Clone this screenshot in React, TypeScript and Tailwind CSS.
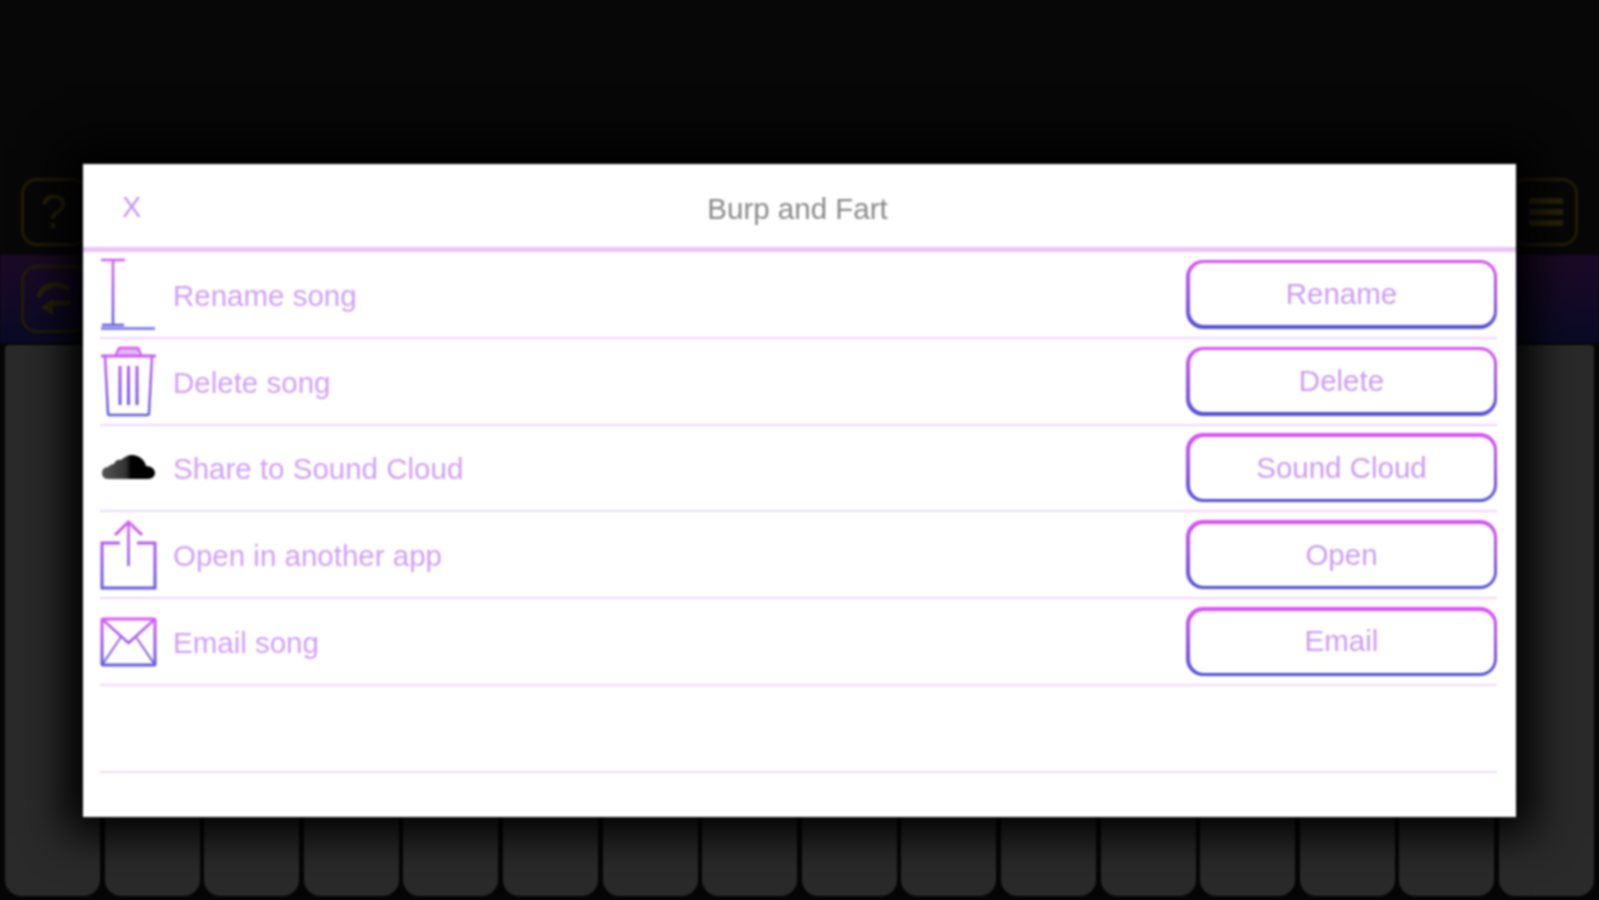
import React from 'react';

const keys = Array.from({ length: 16 }, (_, i) => i);

const Grad: React.FC<{ id: string; h: number }> = ({ id, h }) => (
    <defs>
        <linearGradient id={id} gradientUnits="userSpaceOnUse" x1="0" y1="0" x2="0" y2={h}>
            <stop offset="0" stopColor="#d95cf6" />
            <stop offset="1" stopColor="#5f5cdc" />
        </linearGradient>
    </defs>
);

const RenameIcon = () => (
    <svg width="57" height="72" viewBox="0 0 57 72" fill="none">
        <Grad id="g-rename" h={72} />
        <g stroke="url(#g-rename)" strokeWidth="2.500">
            <path d="M1 2h24M13 2v66M2 67h22" />
            <path d="M1 70.500h54" strokeWidth="3" opacity="0.75" />
        </g>
    </svg>
);

const TrashIcon = () => (
    <svg width="57" height="72" viewBox="0 0 57 72" fill="none">
        <Grad id="g-trash" h={72} />
        <g stroke="url(#g-trash)" strokeWidth="2.500" strokeLinejoin="round">
            <path d="M1 11h55" strokeWidth="3" />
            <path d="M16 10l3-7h19l3 7" />
            <path d="M19 7h19" strokeWidth="6" opacity="0.45" />
            <path d="M5 11l3 57a2 2 0 0 0 2 2h37a2 2 0 0 0 2-2l3-57" />
            <path d="M20 21v39M28.500 21v39M37 21v39" strokeWidth="3" />
        </g>
    </svg>
);

const CloudIcon = () => (
    <svg width="54" height="28" viewBox="0 0 54 28">
        <defs>
            <linearGradient id="g-cloud" x1="0" y1="0" x2="1" y2="0">
                <stop offset="0" stopColor="#555" />
                <stop offset="0.45" stopColor="#333" />
                <stop offset="0.55" stopColor="#000" />
                <stop offset="1" stopColor="#000" />
            </linearGradient>
        </defs>
        <path
            fill="url(#g-cloud)"
            d="M6 25C2 25 0 22 0 19c0-3 2-6 6-6 1-1 3-3 6-3 1-3 4-5 7-4 3-3 7-5 11-5 7 0 13 5 14 11 5 0 9 3 9 7 0 3-3 6-7 6z"
        />
    </svg>
);

const ShareIcon = () => (
    <svg width="57" height="70" viewBox="0 0 57 70" fill="none">
        <Grad id="g-share" h={70} />
        <g stroke="url(#g-share)" strokeWidth="3">
            <path d="M20 23H2v45h53V23H37" />
            <path d="M28.500 2v44" strokeWidth="2.500" />
            <path d="M15 15L28.500 2 42 15" />
        </g>
    </svg>
);

const MailIcon = () => (
    <svg width="57" height="50" viewBox="0 0 57 50" fill="none">
        <Grad id="g-mail" h={50} />
        <g stroke="url(#g-mail)" strokeWidth="3" strokeLinejoin="round">
            <rect x="2" y="2" width="53" height="46" rx="1" />
            <path d="M2 2l26.500 24L55 2" strokeWidth="2.500" />
            <path d="M2 48l19-28M55 48L36 20" strokeWidth="2" />
        </g>
    </svg>
);

const SwapIcon = () => (
    <svg width="36" height="44" viewBox="0 0 36 44" fill="none" stroke="currentColor" strokeWidth="5">
        <path d="M2 20C4 8 20 4 32 12" />
        <path d="M34 26H12" />
        <path d="M4 30l12-8v16z" fill="currentColor" stroke="none" />
    </svg>
);

const rows = [
    { icon: <RenameIcon />, label: 'Rename song', action: 'Rename' },
    { icon: <TrashIcon />, label: 'Delete song', action: 'Delete' },
    { icon: <CloudIcon />, label: 'Share to Sound Cloud', action: 'Sound Cloud' },
    { icon: <ShareIcon />, label: 'Open in another app', action: 'Open' },
    { icon: <MailIcon />, label: 'Email song', action: 'Email' },
];

const ToolButton: React.FC<{ children: React.ReactNode }> = ({ children }) => (
    <div className="w-[68px] h-[68px] border-[3px] border-[#221d06] rounded-[16px] flex items-center justify-center text-[#282206]">
        {children}
    </div>
);

export default function App() {
    return (
        <div className="w-[1599px] h-[900px] overflow-hidden bg-[#070707]">
            <div className="relative w-full h-full blur-[1px] font-['Liberation_Sans',sans-serif]">
                {/* piano screen behind the dialog */}
                <div className="flex flex-col h-full">
                    <div className="h-[255px] flex items-end justify-between px-[21px] pb-[9px]">
                        <ToolButton>
                            <span className="mr-[3px] text-[48px] leading-none">?</span>
                        </ToolButton>
                        <ToolButton>
                            <div className="ml-[3px] flex flex-col gap-[5px]">
                                <div className="w-[34px] h-[6px] bg-[#2a2307]" />
                                <div className="w-[34px] h-[6px] bg-[#2a2307]" />
                                <div className="w-[34px] h-[6px] bg-[#2a2307]" />
                            </div>
                        </ToolButton>
                    </div>
                    <div className="h-[88px] flex items-center px-[21px] bg-gradient-to-b from-[#1c0a26] to-[#0a0a26]">
                        <ToolButton>
                            <SwapIcon />
                        </ToolButton>
                    </div>
                    <div className="flex-1 flex gap-[4.500px] px-[5px] pt-[2px] pb-[4px] bg-[#050505]">
                        {keys.map(k => (
                            <div key={k} className="flex-1 bg-[#2a2a2a] rounded-t-[4px] rounded-b-[16px]" />
                        ))}
                    </div>
                </div>

                {/* dialog */}
                <div className="absolute left-[83px] top-[164px] w-[1433px] h-[653px] bg-white shadow-[0_0_40px_18px_#000]">
                    <div className="relative h-[88px] flex items-center justify-center border-b-[5px] border-[#e6c4fa]">
                        <span className="absolute left-[39px] top-[29px] text-[29px] leading-none text-[#c998f2]">X</span>
                        <span className="mr-[4px] pt-[8px] text-[29.500px] text-[#8a8a8a]">Burp and Fart</span>
                    </div>
                    <div className="pl-[17px] pr-[19px]">
                        {rows.map(row => (
                            <div key={row.label} className="h-[86.800px] flex items-center border-b-2 border-[#eed8fb]">
                                <div className="w-[57px] flex justify-center">{row.icon}</div>
                                <span className="ml-[16px] pt-[3px] flex-1 text-[29.500px] text-[#cf9ff5]">{row.label}</span>
                                <div className="w-[311px] h-[69px] p-[3.500px] rounded-[17px] bg-gradient-to-b from-[#dc50f6] to-[#4f4fd6]">
                                    <div className="w-full h-full rounded-[14px] bg-white flex items-center justify-center text-[29.500px] text-[#cb9cf4]">
                                        {row.action}
                                    </div>
                                </div>
                            </div>
                        ))}
                        <div className="h-[86.800px] border-b-2 border-[#eed8fb]" />
                    </div>
                </div>
            </div>
        </div>
    );
}
